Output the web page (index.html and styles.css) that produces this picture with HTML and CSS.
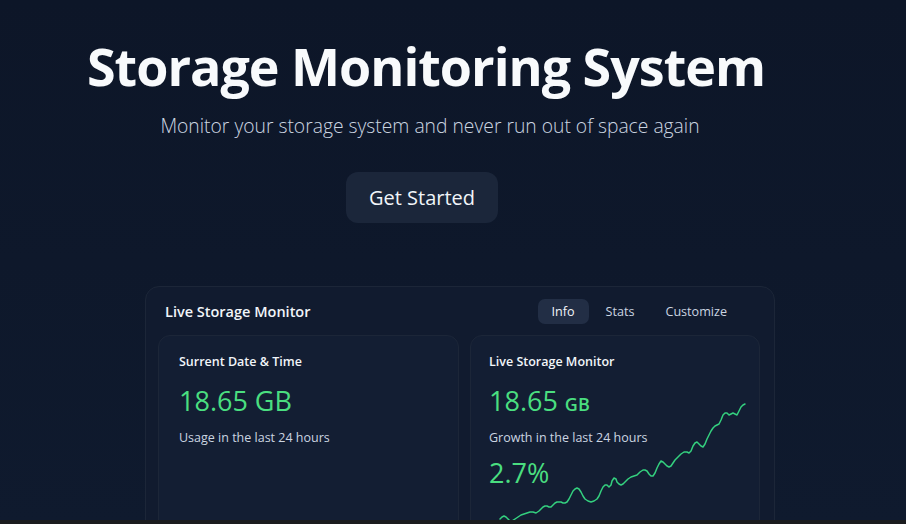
FILE: index.html
```html
<!DOCTYPE html>
<html lang="en">
<head>
<meta charset="utf-8">
<title>Storage Monitoring System</title>
<link rel="stylesheet" href="styles.css">
</head>
<body>
<main class="page">
  <section class="hero">
    <h1 class="hero-title">Storage Monitoring System</h1>
    <p class="hero-sub">Monitor your storage system and never run out of space again</p>
    <button class="hero-btn">Get Started</button>
  </section>
  <section class="monitor">
    <header class="monitor-head">
      <h2 class="monitor-title">Live Storage Monitor</h2>
      <nav class="tabs">
        <span class="tab active">Info</span>
        <span class="tab">Stats</span>
        <span class="tab">Customize</span>
      </nav>
    </header>
    <div class="grid">
      <article class="panel">
        <h3 class="panel-title">Surrent Date &amp; Time</h3>
        <div class="value">18.65 GB</div>
        <p class="caption">Usage in the last 24 hours</p>
      </article>
      <article class="panel chart-panel">
        <h3 class="panel-title">Live Storage Monitor</h3>
        <div class="value">18.65 <span class="unit">GB</span></div>
        <p class="caption">Growth in the last 24 hours</p>
        <div class="value pct">2.7%</div>
        <svg class="chart" viewBox="495 400 255 125" width="255" height="125">
          <polyline fill="none" stroke="#34d07f" stroke-width="1.5" stroke-linejoin="round" stroke-linecap="round"
            points="500,519 502,517 504,516 506,517 508,519 510,521 512,521 515,519 518,517 521,515 524,514 527,513 530,512 533,512 536,513 539,511 541,509 543,507 545,506 547,506 549,507 551,507 553,505 555,503 557,502 559,502 561,502 563,503 565,503 567,502 569,499 571,495 573,491 575,489 577,488 579,489 581,492 583,496 585,499 588,501 591,502 594,501 597,499 599,496 601,491 603,487 605,485 607,485 609,487 611,485 612,481 614,478 616,479 617,482 619,484 621,485 623,484 625,482 628,479 631,477 634,476 637,475 640,472 643,470 645,470 647,471 649,474 651,476 653,476 655,473 657,468 659,464 661,461 663,462 665,464 667,466 669,467 671,466 673,463 675,460 678,457 681,454 684,452 687,452 689,453 691,451 693,446 695,443 697,442 699,444 701,446 703,447 705,444 707,439 709,435 711,431 713,428 715,426 717,425 719,424 721,420 723,415 725,413 727,413 729,415 731,414 733,413 735,414 737,415 739,411 741,407 743,405 745,404"/>
        </svg>
      </article>
    </div>
  </section>
</main>
<div class="bottom-strip"></div>
</body>
</html>
```

FILE: styles.css
```css
* { box-sizing: border-box; }
html, body { margin: 0; height: 100%; }
body {
  display: flex;
  flex-direction: column;
  height: 100vh;
  overflow: hidden;
  background: linear-gradient(180deg, #0d1628 0%, #0f1a2e 100%);
  font-family: "Open Sans", "Noto Sans", sans-serif;
  color: #f1f5f9;
}
.page {
  flex: 1;
  min-height: 0;
  overflow: hidden;
}
.hero {
  display: flex;
  flex-direction: column;
  align-items: center;
  padding-right: 54px;
}
.hero-title {
  margin: 32px 0 0;
  font-size: 52px;
  line-height: 67px;
  font-weight: 700;
  color: #f8fafc;
  letter-spacing: -1px;
}
.hero-sub {
  margin: 13px 0 0 8px;
  font-size: 19.3px;
  line-height: 28px;
  font-weight: 300;
  color: #cbd5e1;
}
.hero-btn {
  margin-top: 32px;
  height: 51px;
  padding: 0 23px;
  border: 0;
  border-radius: 12px;
  background: #1b263a;
  color: #f1f5f9;
  font-family: inherit;
  font-size: 20px;
  line-height: 29px;
  transform: translateX(-4px);
}
.monitor {
  margin: 63px 0 0 145px;
  width: 630px;
  border: 1px solid #1c2638;
  border-radius: 14px;
  background: #111b2f;
  padding: 0 14px 0 12px;
}
.monitor-head {
  display: flex;
  align-items: center;
  justify-content: space-between;
  padding: 0 19px 0 7px;
  height: 48px;
}
.monitor-title {
  margin: 0;
  font-size: 14.5px;
  font-weight: 600;
  color: #f1f5f9;
}
.tabs {
  display: flex;
  gap: 3px;
}
.tab {
  padding: 3px 14px;
  line-height: 19px;
  font-size: 12.6px;
  border-radius: 7px;
  color: #cbd5e1;
}
.tab.active {
  background: #222e45;
  color: #f1f5f9;
}
.grid {
  display: grid;
  grid-template-columns: 301px 290px;
  gap: 11px;
}
.panel {
  position: relative;
  height: 240px;
  border: 1px solid #1c2638;
  border-radius: 12px;
  background: #131e33;
  padding: 16px 20px 0;
}
.chart-panel { padding-left: 18px; }
.panel-title {
  margin: 0;
  font-size: 12.5px;
  line-height: 20px;
  font-weight: 600;
  color: #f1f5f9;
}
.value {
  margin-top: 11px;
  font-size: 27px;
  line-height: 36px;
  color: #4ade80;
}
.unit {
  font-size: 18px;
  line-height: 20px;
  font-weight: 600;
}
.caption {
  margin: 9px 0 0;
  font-size: 12.5px;
  line-height: 20px;
  color: #cbd5e1;
}
.value.pct { margin-top: 7px; }
.chart {
  position: absolute;
  left: 24px;
  top: 64px;
}
.bottom-strip {
  height: 4px;
  flex: none;
  background: #1b1c1e;
}
```
